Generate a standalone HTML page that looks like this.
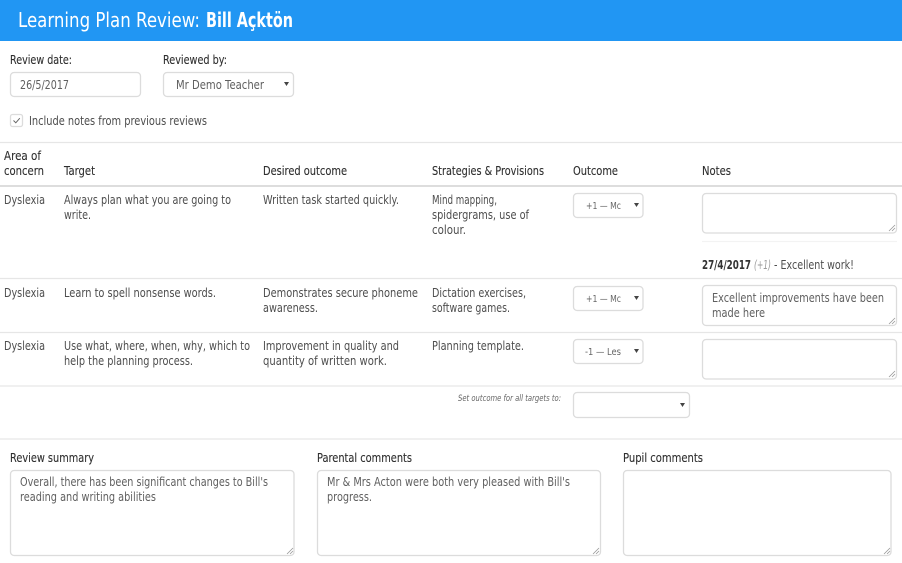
<!DOCTYPE html>
<html lang="en">
<head>
<meta charset="utf-8">
<title>Learning Plan Review</title>
<style>
html,body{margin:0;padding:0;background:#fff;width:902px;height:563px;overflow:hidden}
svg{display:block;filter:blur(.3px)}
text{font-family:"DejaVu Sans","Liberation Sans",sans-serif;font-size:12px;fill:#4d4d4d}
.d{fill:#2e2e2e;stroke:#333;stroke-width:.12}
.v{fill:#5f5f5f}
.s{font-size:10px;fill:#666}
.box{fill:#fff;stroke:#dcdcdc;stroke-width:1.3}
.ln{stroke:#e6e6e6;stroke-width:1.3}
.ar{fill:#444}
.h{fill:none;stroke:#999;stroke-width:.8}
</style>
</head>
<body>
<svg width="902" height="563" viewBox="0 0 902 563" xmlns="http://www.w3.org/2000/svg">
<rect x="0" y="0" width="902" height="41" fill="#2196f3"/>
<text x="18" y="27" textLength="182" lengthAdjust="spacingAndGlyphs" style="font-size:20px;fill:#fff">Learning Plan Review:</text>
<text x="206" y="27" textLength="87" lengthAdjust="spacingAndGlyphs" style="font-size:20px;fill:#fff;font-weight:bold">Bill Açktön</text>

<text class="d" x="10" y="64" textLength="62" lengthAdjust="spacingAndGlyphs">Review date:</text>
<text class="d" x="163" y="64" textLength="64" lengthAdjust="spacingAndGlyphs">Reviewed by:</text>
<rect class="box" x="10.5" y="72.5" width="130" height="24" rx="3.5"/>
<text class="v" x="20" y="89" textLength="49" lengthAdjust="spacingAndGlyphs">26/5/2017</text>
<rect class="box" x="163.5" y="72.5" width="130" height="24" rx="3.5"/>
<text class="v" x="176" y="89" textLength="88" lengthAdjust="spacingAndGlyphs">Mr Demo Teacher</text>
<path class="ar" d="M284 82h5l-2.5 4z"/>

<rect class="box" x="10.5" y="114.5" width="12" height="12" rx="2"/>
<path d="M13.5 120.5l2.3 2.3 4-4.6" fill="none" stroke="#666" stroke-width="1"/>
<text x="29" y="125" textLength="178" lengthAdjust="spacingAndGlyphs">Include notes from previous reviews</text>

<line class="ln" x1="0" y1="142.5" x2="902" y2="142.5"/>
<text class="d" x="4" y="160" textLength="37" lengthAdjust="spacingAndGlyphs">Area of</text>
<text class="d" x="4" y="175" textLength="40" lengthAdjust="spacingAndGlyphs">concern</text>
<text class="d" x="64" y="175" textLength="31" lengthAdjust="spacingAndGlyphs">Target</text>
<text class="d" x="263" y="175" textLength="84" lengthAdjust="spacingAndGlyphs">Desired outcome</text>
<text class="d" x="432" y="175" textLength="112" lengthAdjust="spacingAndGlyphs">Strategies &amp; Provisions</text>
<text class="d" x="573" y="175" textLength="45" lengthAdjust="spacingAndGlyphs">Outcome</text>
<text class="d" x="702" y="175" textLength="29" lengthAdjust="spacingAndGlyphs">Notes</text>
<line x1="0" y1="186" x2="902" y2="186" stroke="#ddd" stroke-width="2"/>

<text x="4" y="204" textLength="41" lengthAdjust="spacingAndGlyphs">Dyslexia</text>
<text x="64" y="204" textLength="167" lengthAdjust="spacingAndGlyphs">Always plan what you are going to</text>
<text x="64" y="219" textLength="27" lengthAdjust="spacingAndGlyphs">write.</text>
<text x="263" y="204" textLength="136" lengthAdjust="spacingAndGlyphs">Written task started quickly.</text>
<text x="432" y="204" textLength="65" lengthAdjust="spacingAndGlyphs">Mind mapping,</text>
<text x="432" y="219" textLength="97" lengthAdjust="spacingAndGlyphs">spidergrams, use of</text>
<text x="432" y="234" textLength="34" lengthAdjust="spacingAndGlyphs">colour.</text>
<rect class="box" x="573.5" y="193.5" width="69.5" height="24" rx="3.5"/>
<text class="s" x="586" y="209" textLength="35" lengthAdjust="spacingAndGlyphs">+1 — Mc</text>
<path class="ar" d="M634 203h5l-2.5 4z"/>
<rect class="box" x="702.5" y="193.5" width="194" height="39.5" rx="3.5"/>
<path class="h" d="M889 231l6-6M892 231l3-3"/>
<line x1="702" y1="241.5" x2="897" y2="241.5" stroke="#f3f3f3" stroke-width="1.3"/>
<text x="702" y="269" textLength="49" lengthAdjust="spacingAndGlyphs" style="font-weight:bold;fill:#333">27/4/2017</text>
<text x="754" y="269" textLength="17" lengthAdjust="spacingAndGlyphs" style="font-style:italic;fill:#999">(+1)</text>
<text x="774" y="269" textLength="80" lengthAdjust="spacingAndGlyphs">- Excellent work!</text>
<line class="ln" x1="0" y1="278.5" x2="902" y2="278.5"/>

<text x="4" y="297" textLength="41" lengthAdjust="spacingAndGlyphs">Dyslexia</text>
<text x="64" y="297" textLength="152" lengthAdjust="spacingAndGlyphs">Learn to spell nonsense words.</text>
<text x="263" y="297" textLength="155" lengthAdjust="spacingAndGlyphs">Demonstrates secure phoneme</text>
<text x="263" y="312" textLength="55" lengthAdjust="spacingAndGlyphs">awareness.</text>
<text x="432" y="297" textLength="94" lengthAdjust="spacingAndGlyphs">Dictation exercises,</text>
<text x="432" y="312" textLength="78" lengthAdjust="spacingAndGlyphs">software games.</text>
<rect class="box" x="573.5" y="286.5" width="69.5" height="24" rx="3.5"/>
<text class="s" x="586" y="302" textLength="35" lengthAdjust="spacingAndGlyphs">+1 — Mc</text>
<path class="ar" d="M634 296h5l-2.5 4z"/>
<rect class="box" x="702.5" y="285.5" width="194" height="40" rx="3.5"/>
<text class="v" x="712" y="302" textLength="172" lengthAdjust="spacingAndGlyphs">Excellent improvements have been</text>
<text class="v" x="712" y="317" textLength="53" lengthAdjust="spacingAndGlyphs">made here</text>
<path class="h" d="M889 324l6-6M892 324l3-3"/>
<line class="ln" x1="0" y1="332.5" x2="902" y2="332.5"/>

<text x="4" y="350" textLength="41" lengthAdjust="spacingAndGlyphs">Dyslexia</text>
<text x="64" y="350" textLength="186" lengthAdjust="spacingAndGlyphs">Use what, where, when, why, which to</text>
<text x="64" y="365" textLength="129" lengthAdjust="spacingAndGlyphs">help the planning process.</text>
<text x="263" y="350" textLength="136" lengthAdjust="spacingAndGlyphs">Improvement in quality and</text>
<text x="263" y="365" textLength="124" lengthAdjust="spacingAndGlyphs">quantity of written work.</text>
<text x="432" y="350" textLength="92" lengthAdjust="spacingAndGlyphs">Planning template.</text>
<rect class="box" x="573.5" y="339.5" width="69.5" height="24" rx="3.5"/>
<text class="s" x="585" y="355" textLength="36" lengthAdjust="spacingAndGlyphs">-1 — Les</text>
<path class="ar" d="M634 349h5l-2.5 4z"/>
<rect class="box" x="702.5" y="339.5" width="194" height="39.5" rx="3.5"/>
<path class="h" d="M889 377l6-6M892 377l3-3"/>
<line class="ln" x1="0" y1="386" x2="902" y2="386"/>

<text x="458" y="401" textLength="103" lengthAdjust="spacingAndGlyphs" style="font-size:8.5px;font-style:italic;fill:#666">Set outcome for all targets to:</text>
<rect class="box" x="573.5" y="392.5" width="116" height="25" rx="3.5"/>
<path class="ar" d="M680 403h5l-2.5 4z"/>
<line class="ln" x1="0" y1="439" x2="902" y2="439"/>

<text class="d" x="10" y="462" textLength="84" lengthAdjust="spacingAndGlyphs">Review summary</text>
<text class="d" x="317" y="462" textLength="95" lengthAdjust="spacingAndGlyphs">Parental comments</text>
<text class="d" x="623" y="462" textLength="80" lengthAdjust="spacingAndGlyphs">Pupil comments</text>
<rect class="box" x="10.5" y="470.5" width="283.5" height="85" rx="3.5"/>
<text class="v" x="20" y="486" textLength="248" lengthAdjust="spacingAndGlyphs">Overall, there has been significant changes to Bill's</text>
<text class="v" x="20" y="501" textLength="136" lengthAdjust="spacingAndGlyphs">reading and writing abilities</text>
<path class="h" d="M287 554l6-6M290 554l3-3"/>
<rect class="box" x="317.5" y="470.5" width="283" height="85" rx="3.5"/>
<text class="v" x="327" y="486" textLength="243" lengthAdjust="spacingAndGlyphs">Mr &amp; Mrs Acton were both very pleased with Bill's</text>
<text class="v" x="327" y="501" textLength="45" lengthAdjust="spacingAndGlyphs">progress.</text>
<path class="h" d="M593 554l6-6M596 554l3-3"/>
<rect class="box" x="623.5" y="470.5" width="267.5" height="85" rx="3.5"/>
<path class="h" d="M884 554l6-6M887 554l3-3"/>
</svg>
</body>
</html>
